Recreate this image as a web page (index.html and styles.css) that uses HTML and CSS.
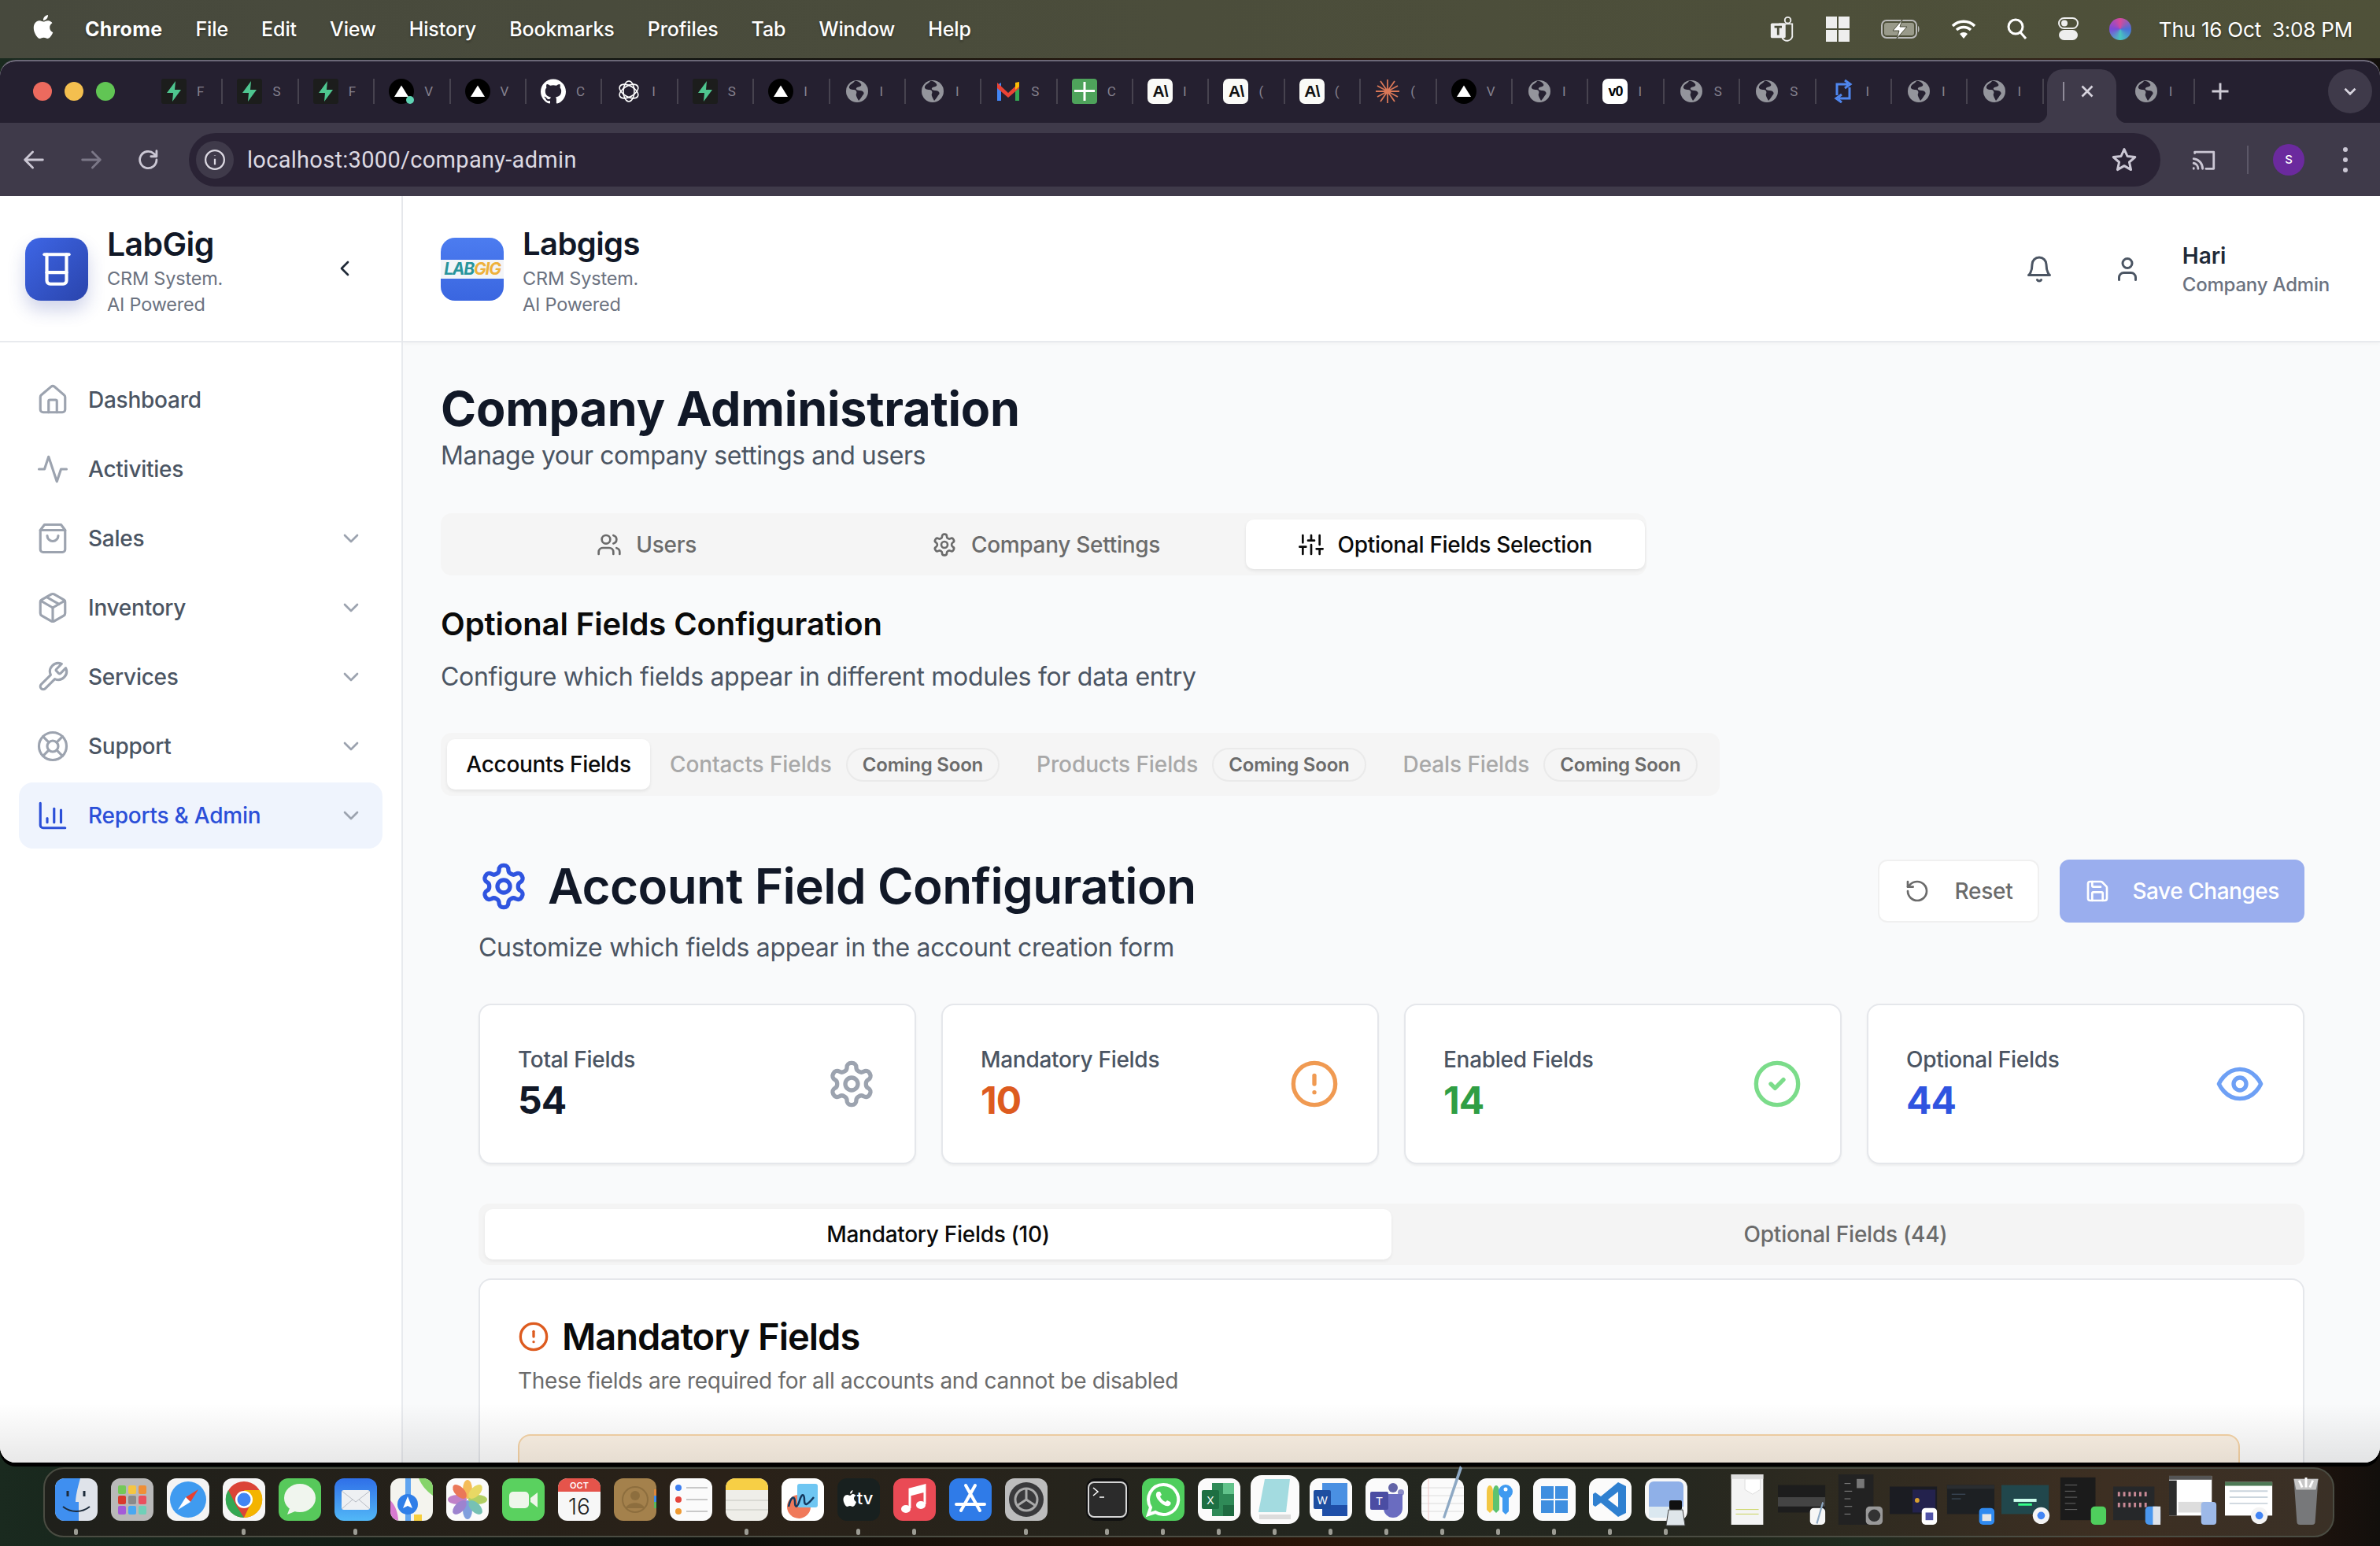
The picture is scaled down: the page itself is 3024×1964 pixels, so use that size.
FILE: index.html
```html
<!DOCTYPE html>
<html lang="en">
<head>
    <meta charset="UTF-8">
    <title>Company Administration</title>
    <link rel="stylesheet" href="styles.css">
</head>
<body>
    <!-- icon sprite -->
    <svg class="sprite" xmlns="http://www.w3.org/2000/svg">
        <symbol id="i-home" viewBox="0 0 24 24"><path d="M15 21v-8a1 1 0 0 0-1-1h-4a1 1 0 0 0-1 1v8"/><path d="M3 10a2 2 0 0 1 .709-1.528l7-5.999a2 2 0 0 1 2.582 0l7 5.999A2 2 0 0 1 21 10v9a2 2 0 0 1-2 2H5a2 2 0 0 1-2-2z"/></symbol>
        <symbol id="i-activity" viewBox="0 0 24 24"><path d="M22 12h-4l-3 9L9 3l-3 9H2"/></symbol>
        <symbol id="i-bag" viewBox="0 0 24 24"><path d="M6 2 3 6v14a2 2 0 0 0 2 2h14a2 2 0 0 0 2-2V6l-3-4Z"/><path d="M3 6h18"/><path d="M16 10a4 4 0 0 1-8 0"/></symbol>
        <symbol id="i-package" viewBox="0 0 24 24"><path d="m7.5 4.27 9 5.15"/><path d="M21 8a2 2 0 0 0-1-1.73l-7-4a2 2 0 0 0-2 0l-7 4A2 2 0 0 0 3 8v8a2 2 0 0 0 1 1.73l7 4a2 2 0 0 0 2 0l7-4A2 2 0 0 0 21 16Z"/><path d="m3.3 7 8.7 5 8.7-5"/><path d="M12 22V12"/></symbol>
        <symbol id="i-wrench" viewBox="0 0 24 24"><path d="M14.7 6.3a1 1 0 0 0 0 1.4l1.6 1.6a1 1 0 0 0 1.4 0l3.77-3.77a6 6 0 0 1-7.94 7.94l-6.91 6.91a2.12 2.12 0 0 1-3-3l6.91-6.91a6 6 0 0 1 7.94-7.94l-3.76 3.76z"/></symbol>
        <symbol id="i-buoy" viewBox="0 0 24 24"><circle cx="12" cy="12" r="10"/><circle cx="12" cy="12" r="4"/><path d="m4.93 4.93 4.24 4.24"/><path d="m14.83 9.17 4.24-4.24"/><path d="m14.83 14.83 4.24 4.24"/><path d="m9.17 14.83-4.24 4.24"/></symbol>
        <symbol id="i-chart" viewBox="0 0 24 24"><path d="M3 3v16a2 2 0 0 0 2 2h16"/><path d="M8 17v-3"/><path d="M13 17V7"/><path d="M18 17v-9"/></symbol>
        <symbol id="i-down" viewBox="0 0 24 24"><path d="m6 9 6 6 6-6"/></symbol>
        <symbol id="i-left" viewBox="0 0 24 24"><path d="m15 18-6-6 6-6"/></symbol>
        <symbol id="i-bell" viewBox="0 0 24 24"><path d="M6 8a6 6 0 0 1 12 0c0 7 3 9 3 9H3s3-2 3-9"/><path d="M10.3 21a1.94 1.94 0 0 0 3.4 0"/></symbol>
        <symbol id="i-user" viewBox="0 0 24 24"><path d="M19 21v-2a4 4 0 0 0-4-4H9a4 4 0 0 0-4 4v2"/><circle cx="12" cy="7" r="4"/></symbol>
        <symbol id="i-users" viewBox="0 0 24 24"><path d="M16 21v-2a4 4 0 0 0-4-4H6a4 4 0 0 0-4 4v2"/><circle cx="9" cy="7" r="4"/><path d="M22 21v-2a4 4 0 0 0-3-3.87"/><path d="M16 3.13a4 4 0 0 1 0 7.75"/></symbol>
        <symbol id="i-settings" viewBox="0 0 24 24"><path d="M12.22 2h-.44a2 2 0 0 0-2 2v.18a2 2 0 0 1-1 1.73l-.43.25a2 2 0 0 1-2 0l-.15-.08a2 2 0 0 0-2.73.73l-.22.38a2 2 0 0 0 .73 2.73l.15.1a2 2 0 0 1 1 1.72v.51a2 2 0 0 1-1 1.74l-.15.09a2 2 0 0 0-.73 2.73l.22.38a2 2 0 0 0 2.73.73l.15-.08a2 2 0 0 1 2 0l.43.25a2 2 0 0 1 1 1.73V20a2 2 0 0 0 2 2h.44a2 2 0 0 0 2-2v-.18a2 2 0 0 1 1-1.73l.43-.25a2 2 0 0 1 2 0l.15.08a2 2 0 0 0 2.73-.73l.22-.39a2 2 0 0 0-.73-2.73l-.15-.08a2 2 0 0 1-1-1.74v-.5a2 2 0 0 1 1-1.74l.15-.09a2 2 0 0 0 .73-2.73l-.22-.38a2 2 0 0 0-2.73-.73l-.15.08a2 2 0 0 1-2 0l-.43-.25a2 2 0 0 1-1-1.73V4a2 2 0 0 0-2-2z"/><circle cx="12" cy="12" r="3"/></symbol>
        <symbol id="i-sliders" viewBox="0 0 24 24"><path d="M4 21v-7M4 10V3M12 21v-9M12 8V3M20 21v-5M20 12V3M1 14h6M9 8h6M17 16h6"/></symbol>
        <symbol id="i-reset" viewBox="0 0 24 24"><path d="M3 12a9 9 0 1 0 9-9 9.75 9.75 0 0 0-6.74 2.74L3 8"/><path d="M3 3v5h5"/></symbol>
        <symbol id="i-save" viewBox="0 0 24 24"><path d="M15.2 3a2 2 0 0 1 1.4.6l3.8 3.8a2 2 0 0 1 .6 1.4V19a2 2 0 0 1-2 2H5a2 2 0 0 1-2-2V5a2 2 0 0 1 2-2z"/><path d="M17 21v-7a1 1 0 0 0-1-1H8a1 1 0 0 0-1 1v7"/><path d="M7 3v4a1 1 0 0 0 1 1h7"/></symbol>
        <symbol id="i-alert" viewBox="0 0 24 24"><circle cx="12" cy="12" r="10"/><path d="M12 8v4"/><path d="M12 16h.01"/></symbol>
        <symbol id="i-check" viewBox="0 0 24 24"><circle cx="12" cy="12" r="10"/><path d="m9 12 2 2 4-4"/></symbol>
        <symbol id="i-eye" viewBox="0 0 24 24"><path d="M2 12s3-7 10-7 10 7 10 7-3 7-10 7-10-7-10-7Z"/><circle cx="12" cy="12" r="3"/></symbol>
        <symbol id="i-beaker" viewBox="0 0 24 24"><path d="M4.5 3h15"/><path d="M6 3v16a2 2 0 0 0 2 2h8a2 2 0 0 0 2-2V3"/><path d="M6 14h12"/></symbol>

        <!-- favicons -->
        <symbol id="f-supa" viewBox="0 0 32 32"><rect width="32" height="32" rx="3" fill="#1c1d1c"/><path d="M18 3 7 18h8l-1 11 11-15h-8z" fill="#4ec68f"/></symbol>
        <symbol id="f-vercel" viewBox="0 0 32 32"><circle cx="16" cy="16" r="16" fill="#000"/><path d="M16 8.5 25 23H7z" fill="#fff"/></symbol>
        <symbol id="f-verceld" viewBox="0 0 32 32"><circle cx="16" cy="16" r="16" fill="#000"/><path d="M16 8.5 25 23H7z" fill="#fff"/><circle cx="27" cy="27" r="5" fill="#5fd4b4"/></symbol>
        <symbol id="f-github" viewBox="0 0 24 24"><path fill="#fff" d="M12 .297c-6.63 0-12 5.373-12 12 0 5.303 3.438 9.8 8.205 11.385.6.113.82-.258.82-.577 0-.285-.01-1.04-.015-2.04-3.338.724-4.042-1.61-4.042-1.61C4.422 18.07 3.633 17.7 3.633 17.7c-1.087-.744.084-.729.084-.729 1.205.084 1.838 1.236 1.838 1.236 1.07 1.835 2.809 1.305 3.495.998.108-.776.417-1.305.76-1.605-2.665-.3-5.466-1.332-5.466-5.93 0-1.31.465-2.38 1.235-3.22-.135-.303-.54-1.523.105-3.176 0 0 1.005-.322 3.3 1.23.96-.267 1.98-.399 3-.405 1.02.006 2.04.138 3 .405 2.28-1.552 3.285-1.23 3.285-1.23.645 1.653.24 2.873.12 3.176.765.84 1.23 1.91 1.23 3.22 0 4.61-2.805 5.625-5.475 5.92.42.36.81 1.096.81 2.22 0 1.606-.015 2.896-.015 3.286 0 .315.21.69.825.57C20.565 22.092 24 17.592 24 12.297c0-6.627-5.373-12-12-12"/></symbol>
        <symbol id="f-openai" viewBox="0 0 32 32"><g fill="none" stroke="#fff" stroke-width="1.600"><ellipse cx="16" cy="16" rx="7" ry="13"/><ellipse cx="16" cy="16" rx="7" ry="13" transform="rotate(60 16 16)"/><ellipse cx="16" cy="16" rx="7" ry="13" transform="rotate(120 16 16)"/></g></symbol>
        <symbol id="f-globe" viewBox="0 0 32 32"><circle cx="16" cy="16" r="14" fill="#94959c"/><path d="M13 3c-2 3-6 4-7 7s3 4 6 4 4 3 3 5 1 5 3 9c3-3 4-6 6-8s-1-5-4-5-6-1-5-3 4-1 6-3-4-7-8-6z" fill="#252030"/></symbol>
        <symbol id="f-gmail" viewBox="0 0 32 32"><path d="M2 28V8l5-3v23z" fill="#4285f4"/><path d="M30 28V8l-5-3v23z" fill="#34a853"/><path d="M2 5l14 13L30 5v7L16 24 2 12z" fill="#ea4335"/><path d="M25 5l5-1v6l-5 4z" fill="#fbbc04"/></symbol>
        <symbol id="f-sheets" viewBox="0 0 32 32"><rect width="32" height="32" rx="4" fill="#4ea35b"/><path d="M14.500 4h3v10H29v3H17.500v11h-3V17H3v-3h11.500z" fill="#fff"/></symbol>
        <symbol id="f-claude" viewBox="0 0 32 32"><path d="M16 1v30M7 3l18 26M25 3 7 29M1 16h30M3 9l26 14M29 9 3 23" stroke="#d97757" stroke-width="1.800"/></symbol>
        <symbol id="f-repeat" viewBox="0 0 32 32"><path d="M8 12V7h14M18 2l7 5-7 5M24 20v5H10M14 20l-7 5 7 5M8 12v9M24 11v9" fill="none" stroke="#4f86ee" stroke-width="3"/></symbol>
    </svg>

    <!-- mac menu bar -->
    <div class="menubar">
        <div class="menu-left">
            <svg class="apple" viewBox="0 0 24 24"><path fill="#fff" d="M12.152 6.896c-.948 0-2.415-1.078-3.96-1.04-2.04.027-3.91 1.183-4.961 3.014-2.117 3.675-.546 9.103 1.519 12.09 1.013 1.454 2.208 3.09 3.792 3.039 1.52-.065 2.09-.987 3.935-.987 1.831 0 2.35.987 3.96.948 1.637-.026 2.676-1.48 3.676-2.948 1.156-1.688 1.636-3.325 1.662-3.415-.039-.013-3.182-1.221-3.22-4.857-.026-3.04 2.48-4.494 2.597-4.559-1.429-2.09-3.623-2.324-4.39-2.376-2-.156-3.675 1.09-4.61 1.09zM15.53 3.83c.843-1.012 1.4-2.427 1.245-3.83-1.207.052-2.662.805-3.532 1.818-.78.896-1.454 2.338-1.273 3.714 1.338.104 2.715-.688 3.559-1.701"/></svg>
            <b>Chrome</b>
            <span>File</span><span>Edit</span><span>View</span><span>History</span><span>Bookmarks</span><span>Profiles</span><span>Tab</span><span>Window</span><span>Help</span>
        </div>
        <div class="menu-right">
            <svg class="st" viewBox="0 0 32 36"><path d="M20 6a4 4 0 1 0 8 0 4 4 0 0 0-8 0z" fill="none" stroke="#eee" stroke-width="2"/><path d="M12 11h18v14a7 7 0 0 1-14 3" fill="none" stroke="#eee" stroke-width="2"/><rect x="1" y="10" width="20" height="20" rx="2" fill="#eee"/><path d="M6 15h10M11 15v11" stroke="#4b4d3b" stroke-width="3"/></svg>
            <svg class="st" viewBox="0 0 32 32"><path d="M1 0h14v15H1zM17 0h14v15H17zM1 17h14v15H1zM17 17h14v15H17z" fill="#eee"/></svg>
            <svg class="st wide" viewBox="0 0 50 26"><rect x="1" y="2" width="44" height="22" rx="6" fill="none" stroke="#bbb" stroke-width="2"/><rect x="4" y="5" width="38" height="16" rx="3" fill="#999a8a"/><path d="M27 1 15 15h8l-3 10 13-15h-9z" fill="#fff" stroke="#4b4d3b"/><path d="M47 9c2 1 2 7 0 8z" fill="#bbb"/></svg>
            <svg class="st" viewBox="0 0 32 26"><g fill="none" stroke="#fff" stroke-width="3.500"><path d="M2 9a20 20 0 0 1 28 0"/><path d="M7 14a13 13 0 0 1 18 0"/></g><path d="M11 19a7 7 0 0 1 10 0l-5 6z" fill="#fff"/></svg>
            <svg class="st small" viewBox="0 0 26 28"><circle cx="11" cy="11" r="9" fill="none" stroke="#fff" stroke-width="3"/><path d="m17 18 7 8" stroke="#fff" stroke-width="3"/></svg>
            <svg class="st small" viewBox="0 0 26 30"><rect x="1" y="1" width="24" height="13" rx="6.500" fill="none" stroke="#eee" stroke-width="2"/><circle cx="8" cy="7.500" r="4" fill="#eee"/><rect x="1" y="16" width="24" height="13" rx="6.500" fill="#eee"/></svg>
            <span class="siri"></span>
            <span class="clock">Thu 16 Oct</span>
            <span class="clock">3:08 PM</span>
        </div>
    </div>

    <div class="window">
        <!-- tab strip -->
        <div class="tabstrip">
            <div class="lights"><i class="red"></i><i class="yellow"></i><i class="green"></i></div>
            <div class="tab"><svg class="fav"><use href="#f-supa"/></svg><span>F</span></div>
            <div class="tab"><svg class="fav"><use href="#f-supa"/></svg><span>S</span></div>
            <div class="tab"><svg class="fav"><use href="#f-supa"/></svg><span>F</span></div>
            <div class="tab"><svg class="fav"><use href="#f-verceld"/></svg><span>V</span></div>
            <div class="tab"><svg class="fav"><use href="#f-vercel"/></svg><span>V</span></div>
            <div class="tab"><svg class="fav"><use href="#f-github"/></svg><span>C</span></div>
            <div class="tab"><svg class="fav"><use href="#f-openai"/></svg><span>I</span></div>
            <div class="tab"><svg class="fav"><use href="#f-supa"/></svg><span>S</span></div>
            <div class="tab"><svg class="fav"><use href="#f-vercel"/></svg><span>I</span></div>
            <div class="tab"><svg class="fav"><use href="#f-globe"/></svg><span>I</span></div>
            <div class="tab"><svg class="fav"><use href="#f-globe"/></svg><span>I</span></div>
            <div class="tab"><svg class="fav"><use href="#f-gmail"/></svg><span>S</span></div>
            <div class="tab"><svg class="fav"><use href="#f-sheets"/></svg><span>C</span></div>
            <div class="tab"><b class="fav-a">A\</b><span>I</span></div>
            <div class="tab"><b class="fav-a">A\</b><span>(</span></div>
            <div class="tab"><b class="fav-a">A\</b><span>(</span></div>
            <div class="tab"><svg class="fav"><use href="#f-claude"/></svg><span>(</span></div>
            <div class="tab"><svg class="fav"><use href="#f-vercel"/></svg><span>V</span></div>
            <div class="tab"><svg class="fav"><use href="#f-globe"/></svg><span>I</span></div>
            <div class="tab"><b class="fav-a fav-v0">v0</b><span>I</span></div>
            <div class="tab"><svg class="fav"><use href="#f-globe"/></svg><span>S</span></div>
            <div class="tab"><svg class="fav"><use href="#f-globe"/></svg><span>S</span></div>
            <div class="tab"><svg class="fav"><use href="#f-repeat"/></svg><span>I</span></div>
            <div class="tab"><svg class="fav"><use href="#f-globe"/></svg><span>I</span></div>
            <div class="tab"><svg class="fav"><use href="#f-globe"/></svg><span>I</span></div>
            <div class="tab tab-active"><em></em><svg class="tab-x" viewBox="0 0 24 24"><path d="M6 6l12 12M18 6 6 18"/></svg></div>
            <div class="tab"><svg class="fav"><use href="#f-globe"/></svg><span>I</span></div>
            <svg class="tab-plus" viewBox="0 0 24 24"><path d="M12 3v18M3 12h18"/></svg>
            <div class="tab-menu"><svg class="tab-x" viewBox="0 0 24 24"><path d="m6 9 6 6 6-6"/></svg></div>
        </div>

        <!-- toolbar -->
        <div class="toolbar">
            <svg class="tool" viewBox="0 0 24 24"><path d="M20 12H4M11 5l-7 7 7 7"/></svg>
            <svg class="tool off" viewBox="0 0 24 24"><path d="M4 12h16M13 5l7 7-7 7"/></svg>
            <svg class="tool" viewBox="0 0 24 24"><path d="M19 12a7.500 7.500 0 1 1-2.400-5.500L19 9M19 4v5h-5"/></svg>
            <div class="omnibox">
                <span class="site-info"><svg class="tool-s" viewBox="0 0 24 24"><circle cx="12" cy="12" r="9.500"/><path d="M12 11v6M12 7.500v.5"/></svg></span>
                <span class="url">localhost:3000/company-admin</span>
                <svg class="tool star" viewBox="0 0 24 24"><path d="m12 3 2.700 6 6.500.7-4.900 4.300 1.400 6.400-5.700-3.300-5.700 3.300 1.400-6.400-4.900-4.300 6.500-.7z"/></svg>
            </div>
            <svg class="tool cast" viewBox="0 0 24 24"><path d="M4 6V5h17v15h-7M3 11a9 9 0 0 1 8 9M3 15a5 5 0 0 1 4 5M3 19.500v.5"/></svg>
            <i class="tool-div"></i>
            <span class="avatar">S</span>
            <span class="kebab"><i></i><i></i><i></i></span>
        </div>

        <!-- the app -->
        <div class="app-page">
            <aside class="sidebar">
                <div class="side-head">
                    <div class="brand-icon"><svg class="ic"><use href="#i-beaker"/></svg></div>
                    <div class="brand-text">
                        <h2>LabGig</h2>
                        <p>CRM System.</p>
                        <p>AI Powered</p>
                    </div>
                    <svg class="ic collapse"><use href="#i-left"/></svg>
                </div>
                <nav class="nav">
                    <a class="nav-item"><svg class="ic"><use href="#i-home"/></svg><span>Dashboard</span></a>
                    <a class="nav-item"><svg class="ic"><use href="#i-activity"/></svg><span>Activities</span></a>
                    <a class="nav-item"><svg class="ic"><use href="#i-bag"/></svg><span>Sales</span><svg class="ic chev"><use href="#i-down"/></svg></a>
                    <a class="nav-item"><svg class="ic"><use href="#i-package"/></svg><span>Inventory</span><svg class="ic chev"><use href="#i-down"/></svg></a>
                    <a class="nav-item"><svg class="ic"><use href="#i-wrench"/></svg><span>Services</span><svg class="ic chev"><use href="#i-down"/></svg></a>
                    <a class="nav-item"><svg class="ic"><use href="#i-buoy"/></svg><span>Support</span><svg class="ic chev"><use href="#i-down"/></svg></a>
                    <a class="nav-item active"><svg class="ic"><use href="#i-chart"/></svg><span>Reports &amp; Admin</span><svg class="ic chev"><use href="#i-down"/></svg></a>
                </nav>
            </aside>

            <div class="main-col">
                <header class="top-head">
                    <div class="co-logo"><span><b>LAB</b><b class="yel">GIG</b></span></div>
                    <div class="brand-text">
                        <h2>Labgigs</h2>
                        <p>CRM System.</p>
                        <p>AI Powered</p>
                    </div>
                    <svg class="ic bell"><use href="#i-bell"/></svg>
                    <svg class="ic head-user"><use href="#i-user"/></svg>
                    <div class="who">
                        <strong>Hari</strong>
                        <small>Company Admin</small>
                    </div>
                </header>

                <main class="content">
                    <h1>Company Administration</h1>
                    <p class="lead page-sub">Manage your company settings and users</p>

                    <div class="tabs-main">
                        <div class="tm"><svg class="ic"><use href="#i-users"/></svg>Users</div>
                        <div class="tm"><svg class="ic"><use href="#i-settings"/></svg>Company Settings</div>
                        <div class="tm on"><svg class="ic"><use href="#i-sliders"/></svg>Optional Fields Selection</div>
                    </div>

                    <h3 class="sec-title">Optional Fields Configuration</h3>
                    <p class="lead sec-sub">Configure which fields appear in different modules for data entry</p>

                    <div class="tabs-sub">
                        <div class="ts on">Accounts Fields</div>
                        <div class="ts">Contacts Fields<em>Coming Soon</em></div>
                        <div class="ts">Products Fields<em>Coming Soon</em></div>
                        <div class="ts">Deals Fields<em>Coming Soon</em></div>
                    </div>

                    <section class="config">
                        <div class="config-head">
                            <div>
                                <h2 class="config-title"><svg class="ic"><use href="#i-settings"/></svg>Account Field Configuration</h2>
                                <p class="lead config-sub">Customize which fields appear in the account creation form</p>
                            </div>
                            <div class="btns">
                                <button class="btn"><svg class="ic"><use href="#i-reset"/></svg>Reset</button>
                                <button class="btn btn-save"><svg class="ic"><use href="#i-save"/></svg>Save Changes</button>
                            </div>
                        </div>

                        <div class="stats">
                            <div class="stat">
                                <div><label>Total Fields</label><b>54</b></div>
                                <svg class="ic c-grey"><use href="#i-settings"/></svg>
                            </div>
                            <div class="stat">
                                <div><label>Mandatory Fields</label><b class="n-orange">10</b></div>
                                <svg class="ic c-orange"><use href="#i-alert"/></svg>
                            </div>
                            <div class="stat">
                                <div><label>Enabled Fields</label><b class="n-green">14</b></div>
                                <svg class="ic c-green"><use href="#i-check"/></svg>
                            </div>
                            <div class="stat">
                                <div><label>Optional Fields</label><b class="n-blue">44</b></div>
                                <svg class="ic c-blue"><use href="#i-eye"/></svg>
                            </div>
                        </div>

                        <div class="tabs-fields">
                            <div class="tf on">Mandatory Fields (10)</div>
                            <div class="tf">Optional Fields (44)</div>
                        </div>

                        <div class="mand-card">
                            <h3><svg class="ic"><use href="#i-alert"/></svg>Mandatory Fields</h3>
                            <p>These fields are required for all accounts and cannot be disabled</p>
                            <div class="mand-box"></div>
                        </div>
                    </section>
                </main>
            </div>
            <div class="dock-shade"></div>
        </div>
    </div>

    <!-- dock -->
    <div class="dock">
        <div class="di run"><svg class="app" viewBox="0 0 54 54"><rect width="54" height="54" rx="12" fill="#dfe3ea"/><path d="M12 0h20c-4 14-6 24-6 30h4v24H12A12 12 0 0 1 0 42V12A12 12 0 0 1 12 0z" fill="#3f8ff0"/><path d="M16 16v7M37 16v7" stroke="#1d2b3a" stroke-width="3"/><path d="M10 36c10 8 24 8 34 0" stroke="#1d2b3a" stroke-width="2" fill="none"/></svg></div>
        <div class="di"><svg class="app" viewBox="0 0 54 54"><rect width="54" height="54" rx="12" fill="#b9b9b9"/><rect x="9" y="9" width="10" height="11" rx="2" fill="#74c958"/><rect x="22" y="9" width="10" height="11" rx="2" fill="#f5c542"/><rect x="35" y="9" width="10" height="11" rx="2" fill="#ef8f37"/><rect x="9" y="22" width="10" height="11" rx="2" fill="#d93a2d"/><rect x="22" y="22" width="10" height="11" rx="2" fill="#8a8a8a"/><rect x="35" y="22" width="10" height="11" rx="2" fill="#e9505f"/><rect x="9" y="35" width="10" height="11" rx="2" fill="#a45bd8"/><rect x="22" y="35" width="10" height="11" rx="2" fill="#4aa8f0"/><rect x="35" y="35" width="10" height="11" rx="2" fill="#6fd0b8"/></svg></div>
        <div class="di"><svg class="app" viewBox="0 0 54 54"><rect width="54" height="54" rx="12" fill="#f4f4f4"/><circle cx="27" cy="27" r="23" fill="#3f9bf0"/><path d="M40 14 24 24l6 6z" fill="#e8402f"/><path d="M14 40 30 30l-6-6z" fill="#fff"/></svg></div>
        <div class="di run"><svg class="app" viewBox="0 0 54 54"><rect width="54" height="54" rx="12" fill="#f6f6f6"/><circle cx="27" cy="27" r="23" fill="#db4437"/><path d="M27 50a23 23 0 0 1-20-35l11 21z" fill="#34a853"/><path d="M27 50a23 23 0 0 0 20-35l-20 0 10 14z" fill="#f4b400"/><circle cx="27" cy="27" r="11" fill="#fff"/><circle cx="27" cy="27" r="8.500" fill="#4285f4"/></svg></div>
        <div class="di"><svg class="app" viewBox="0 0 54 54"><rect width="54" height="54" rx="12" fill="#57c95b"/><ellipse cx="27" cy="25" rx="20" ry="18" fill="#f0f5ee"/><path d="M14 38l-3 8 10-4z" fill="#f0f5ee"/></svg></div>
        <div class="di run"><svg class="app" viewBox="0 0 54 54"><defs><linearGradient id="g-mail" x1="0" y1="0" x2="0" y2="1"><stop offset="0" stop-color="#2f6fe8"/><stop offset="1" stop-color="#52b8f7"/></linearGradient></defs><rect width="54" height="54" rx="12" fill="url(#g-mail)"/><rect x="9" y="15" width="36" height="25" rx="3" fill="#eef0f3"/><path d="M9 16l18 14 18-14M9 39l14-12M45 39 31 27" fill="none" stroke="#b8bcc4"/></svg></div>
        <div class="di"><svg class="app" viewBox="0 0 54 54"><rect width="54" height="54" rx="12" fill="#f4f4ee"/><path d="M36 0h6a12 12 0 0 1 12 12v10c-8-6-14-12-18-22z" fill="#86d46b"/><path d="M0 28c6 6 10 16 10 26h-0A12 12 0 0 1 0 42z" fill="#d77ad0"/><path d="M19 0h7v54h-7z" fill="#60a5f0"/><circle cx="22" cy="33" r="13" fill="#2f7ee8"/><path d="M22 23l6 15-6-3-6 3z" fill="#fff"/><path d="M30 46h10v8H30z" fill="#f6cf3f"/></svg></div>
        <div class="di"><svg class="app" viewBox="0 0 54 54"><rect width="54" height="54" rx="12" fill="#fbfbfb"/><g opacity=".85"><ellipse cx="27" cy="14" rx="6" ry="12" fill="#f3b23c"/><ellipse cx="27" cy="40" rx="6" ry="12" fill="#6b8fd8"/><ellipse cx="14" cy="27" rx="12" ry="6" fill="#b66cc0"/><ellipse cx="40" cy="27" rx="12" ry="6" fill="#a5c84a"/><ellipse cx="17" cy="17" rx="6" ry="11" fill="#e8603c" transform="rotate(-45 17 17)"/><ellipse cx="37" cy="17" rx="6" ry="11" fill="#e5d24a" transform="rotate(45 37 17)"/><ellipse cx="17" cy="37" rx="6" ry="11" fill="#8d6fc8" transform="rotate(45 17 37)"/><ellipse cx="37" cy="37" rx="6" ry="11" fill="#5fb8a8" transform="rotate(-45 37 37)"/></g></svg></div>
        <div class="di"><svg class="app" viewBox="0 0 54 54"><rect width="54" height="54" rx="12" fill="#5ad15f"/><rect x="9" y="17" width="25" height="21" rx="5" fill="#eef6ea"/><path d="M36 25l9-7v19l-9-7z" fill="#eef6ea"/></svg></div>
        <div class="di"><svg class="app" viewBox="0 0 54 54"><rect width="54" height="54" rx="12" fill="#f7f7f7"/><path d="M0 17V12A12 12 0 0 1 12 0h30a12 12 0 0 1 12 12v5z" fill="#e5544b"/><text x="27" y="13" class="cal-m">OCT</text><text x="27" y="46" class="cal-d">16</text></svg></div>
        <div class="di"><svg class="app" viewBox="0 0 54 54"><rect width="54" height="54" rx="12" fill="#a4814c"/><circle cx="27" cy="27" r="16" fill="none" stroke="#8d6e3e" stroke-width="2"/><circle cx="27" cy="22" r="6" fill="#8d6e3e"/><path d="M15 38c3-9 21-9 24 0z" fill="#8d6e3e"/><path d="M51 14h3v8h-3z" fill="#e0883a"/><path d="M51 22h3v8h-3z" fill="#3f8ff0"/><path d="M51 30h3v8h-3z" fill="#58b85c"/></svg></div>
        <div class="di"><svg class="app" viewBox="0 0 54 54"><rect width="54" height="54" rx="12" fill="#fbfbfb"/><circle cx="11" cy="12" r="4" fill="#3d7ff0"/><circle cx="11" cy="27" r="4" fill="#e5453c"/><circle cx="11" cy="42" r="4" fill="#ef9a32"/><path d="M21 12h27M21 27h27M21 42h27" stroke="#c9c9c9" stroke-width="2"/></svg></div>
        <div class="di run"><svg class="app" viewBox="0 0 54 54"><rect width="54" height="54" rx="12" fill="#efeee9"/><path d="M0 15V12A12 12 0 0 1 12 0h30a12 12 0 0 1 12 12v3z" fill="#f7cf45"/><path d="M0 28h54M0 40h54" stroke="#dadad4" stroke-width="2"/></svg></div>
        <div class="di"><svg class="app" viewBox="0 0 54 54"><rect width="54" height="54" rx="12" fill="#fff"/><circle cx="22" cy="36" r="15" fill="#f0795a"/><rect x="20" y="7" width="26" height="30" rx="3" fill="#6fc6f2"/><path d="M9 36c3-14 8-14 8-6s3 8 6-2 6-8 6 0 4 6 12-4" fill="none" stroke="#15385e" stroke-width="2.500"/></svg></div>
        <div class="di run"><svg class="app" viewBox="0 0 54 54"><rect width="54" height="54" rx="12" fill="#18201f"/><text x="35" y="33" class="tv-txt">tv</text><path d="M16 22c-1 0-2-1-3.500-1-3 0-5 3-5 6 0 4 3 9 5 9 1 0 2-1 3.500-1s2 1 3.500 1c2 0 4-4 4.500-6-2-1-3-3-3-4.500s1-3 2.500-3.500c-1-1.500-3-2-4-2-1.500 0-2.500 2-3.500 2zM18 19c1-1 1.500-2.500 1.500-4-1.500.2-3.500 2-3.500 4.500 1 0 1.500 0 2-.5z" fill="#fff"/></svg></div>
        <div class="di run"><svg class="app" viewBox="0 0 54 54"><rect width="54" height="54" rx="12" fill="#ea4a55"/><path d="M21 14v24M40 9v24M21 14l19-5v7l-19 5z" stroke="#fff" stroke-width="3" fill="#fff"/><ellipse cx="16" cy="39" rx="6" ry="5" fill="#fff"/><ellipse cx="35" cy="34" rx="6" ry="5" fill="#fff"/></svg></div>
        <div class="di"><svg class="app" viewBox="0 0 54 54"><rect width="54" height="54" rx="12" fill="#2f7be8"/><path d="M21 9l18 32M33 9 15 41M9 33h36" stroke="#fff" stroke-width="4" stroke-linecap="round"/></svg></div>
        <div class="di run"><svg class="app" viewBox="0 0 54 54"><rect width="54" height="54" rx="12" fill="#bdbdbd"/><circle cx="27" cy="27" r="22" fill="#3a3a3c"/><circle cx="27" cy="27" r="14" fill="none" stroke="#aaa" stroke-width="3"/><path d="M27 27V13M27 27l12 8M27 27l-12 8" stroke="#aaa" stroke-width="3"/></svg></div>
        <i class="dock-sep"></i>
        <div class="di run"><svg class="app" viewBox="0 0 54 54"><rect width="54" height="54" rx="12" fill="#111"/><rect x="3" y="5" width="48" height="44" rx="7" fill="#2b2b2b" stroke="#d6d6d6" stroke-width="2"/><path d="M9 12l6 5-6 5M17 24h6" fill="none" stroke="#fff" stroke-width="1.500"/></svg></div>
        <div class="di run"><svg class="app" viewBox="0 0 54 54"><rect width="54" height="54" rx="12" fill="#4fce5d"/><path d="M27 8a19 19 0 0 0-16 29l-3 9 9-3A19 19 0 1 0 27 8z" fill="none" stroke="#fff" stroke-width="4"/><path d="M20 17c-3 2-3 6 1 11s9 8 13 7c3-1 3-4 2-5l-4-2-2 2c-3-1-6-4-7-7l2-2-2-4z" fill="#fff"/></svg></div>
        <div class="di run"><svg class="app" viewBox="0 0 54 54"><rect width="54" height="54" rx="12" fill="#fbfbfb"/><path d="M18 6h28v42H18z" fill="#2f8a57"/><path d="M32 6h14v14H32z" fill="#62c38b"/><path d="M32 34h14v14H32z" fill="#1f6b41"/><rect x="5" y="15" width="22" height="24" rx="2" fill="#1d6f42"/><text x="16" y="33" class="mso">X</text></svg></div>
        <div class="di run"><svg class="app" viewBox="0 0 54 54"><rect x="-4" y="-4" width="62" height="62" rx="14" fill="#fbfbfb"/><rect x="7" y="46" width="40" height="6" fill="#dcdcdc"/><path d="M14 1h32l-5 42H6z" fill="#a3dbe0"/></svg></div>
        <div class="di run"><svg class="app" viewBox="0 0 54 54"><rect width="54" height="54" rx="12" fill="#fbfbfb"/><path d="M16 6h32v42H16z" fill="#4a90e2"/><path d="M16 34h32v14H16z" fill="#1f4fa8"/><rect x="5" y="15" width="22" height="24" rx="2" fill="#1e4ea0"/><text x="16" y="33" class="mso">W</text></svg></div>
        <div class="di run"><svg class="app" viewBox="0 0 54 54"><rect width="54" height="54" rx="12" fill="#fbfbfb"/><circle cx="35" cy="12" r="6" fill="#6264a7"/><circle cx="45" cy="18" r="4" fill="#8b8cc7"/><path d="M23 20h24v18a12 12 0 0 1-24 0z" fill="#6a6cc0"/><rect x="6" y="17" width="23" height="23" rx="2" fill="#4b4da3"/><text x="17.500" y="34" class="mso">T</text></svg></div>
        <div class="di run"><svg class="app" viewBox="0 0 54 54"><rect width="54" height="54" rx="12" fill="#fbfbfb"/><path d="M0 12h54M0 22h54M0 32h54M0 42h54" stroke="#dcdcdc"/><path d="M9 0v54" stroke="#f2c6c6"/><path d="M49 -16l3 3-22 64-3-1z" fill="#8ea9c4"/></svg></div>
        <div class="di run"><svg class="app" viewBox="0 0 54 54"><rect width="54" height="54" rx="12" fill="#fbfbfb"/><path d="M12 18c0-12 8-12 8 0v22l-4 4-4-4z" fill="#f2c744"/><path d="M20 18c0-12 8-12 8 0v22l-4 4-4-4z" fill="#5dc36f"/><circle cx="36" cy="17" r="9" fill="#3f9af0"/><path d="M32 22h8v20l-4 4-4-4z" fill="#3f9af0"/><circle cx="36" cy="14" r="2.500" fill="#fff"/></svg></div>
        <div class="di run"><svg class="app" viewBox="0 0 54 54"><rect width="54" height="54" rx="12" fill="#fbfbfb"/><path d="M10 10h16v16H10zM28 10h16v16H28zM10 28h16v16H10zM28 28h16v16H28z" fill="#3f8fe0"/></svg></div>
        <div class="di run"><svg class="app" viewBox="0 0 54 54"><rect width="54" height="54" rx="12" fill="#fbfbfb"/><path d="M37 5l10 5v34l-10 5-22-18-7 5-3-2V20l3-2 7 5zM37 17 24 27l13 10z" fill="#2f80d0"/></svg></div>
        <div class="di run"><svg class="app" viewBox="0 0 54 54"><rect width="54" height="54" rx="12" fill="#f7f7f7"/><rect x="5" y="4" width="44" height="46" rx="6" fill="#8fb0e8"/><rect x="5" y="36" width="44" height="14" fill="#dbe8f0"/><rect x="31" y="28" width="16" height="12" rx="2" fill="#111"/><path d="M30 40h18l3 20H27z" fill="#dfe6ea" stroke="#444"/></svg></div>
        <i class="dock-sep"></i>
        <div class="di thumb"><svg viewBox="0 0 66 66"><rect x="12" y="0" width="42" height="66" fill="#f4f4f4"/><rect x="12" y="0" width="42" height="6" fill="#ddd"/><path d="M18 46h30M18 52h30" stroke="#c9d45a"/><path d="M30 6h20v14l-10 6-10-6z" fill="#fff" stroke="#ddd"/></svg></div>
        <div class="di thumb"><svg viewBox="0 0 66 66"><rect x="0" y="14" width="62" height="36" fill="#1d1d1d"/><path d="M0 30h62v12H0z" fill="#444"/><rect x="42" y="44" width="20" height="22" rx="5" fill="#f6f6f6"/><path d="M58 36l2 1-8 28-2-1z" fill="#8ea9c4"/></svg></div>
        <div class="di thumb"><svg viewBox="0 0 66 66"><rect x="6" y="0" width="46" height="66" fill="#222"/><path d="M14 12h8M14 22h10M14 32h8M14 42h10M14 52h8" stroke="#888"/><rect x="30" y="6" width="10" height="12" fill="#777"/><rect x="42" y="42" width="22" height="24" rx="5" fill="#999"/><circle cx="53" cy="54" r="8" fill="#333"/></svg></div>
        <div class="di thumb"><svg viewBox="0 0 66 66"><rect x="0" y="16" width="62" height="36" fill="#1b1c22"/><rect x="30" y="20" width="30" height="30" fill="#23224d"/><circle cx="36" cy="34" r="3" fill="#d8a030"/><rect x="42" y="44" width="20" height="22" rx="5" fill="#fff"/><rect x="47" y="50" width="10" height="10" fill="#5053a8"/></svg></div>
        <div class="di thumb"><svg viewBox="0 0 66 66"><rect x="2" y="14" width="62" height="38" fill="#1d2023"/><rect x="2" y="14" width="62" height="5" fill="#2a2d30"/><path d="M8 26h18M8 32h12" stroke="#456"/><rect x="44" y="44" width="20" height="22" rx="5" fill="#2f8af0"/><rect x="48" y="52" width="12" height="9" fill="#e6e6e6"/></svg></div>
        <div class="di thumb"><svg viewBox="0 0 66 66"><rect x="0" y="14" width="62" height="38" fill="#21474c"/><rect x="16" y="32" width="30" height="4" fill="#cfe"/><rect x="22" y="38" width="18" height="3" fill="#3f8"/><circle cx="52" cy="54" r="11" fill="#f4f4f4"/><circle cx="52" cy="54" r="5" fill="#4285f4"/></svg></div>
        <div class="di thumb"><svg viewBox="0 0 66 66"><rect x="4" y="4" width="46" height="56" fill="#1b1b1b"/><path d="M10 14h16M10 22h14M10 30h16M10 38h14M10 46h16" stroke="#6a6a6a"/><rect x="44" y="42" width="20" height="24" rx="5" fill="#4fce5d"/></svg></div>
        <div class="di thumb"><svg viewBox="0 0 66 66"><rect x="0" y="16" width="54" height="44" fill="#26282a"/><path d="M6 26h42M6 40h42" stroke="#c98a96" stroke-width="6" stroke-dasharray="3 4"/><rect x="42" y="42" width="20" height="24" rx="5" fill="#4a97ee"/><path d="M52 42h10v24H52z" fill="#dfe3ea"/></svg></div>
        <div class="di thumb"><svg viewBox="0 0 66 66"><rect x="0" y="2" width="56" height="52" fill="#fff"/><rect x="0" y="2" width="56" height="5" fill="#555"/><rect x="0" y="8" width="10" height="46" fill="#2c2c2c"/><rect x="12" y="36" width="40" height="14" fill="#ddd"/><rect x="42" y="36" width="20" height="30" rx="4" fill="#9db9e8"/></svg></div>
        <div class="di thumb"><svg viewBox="0 0 66 66"><rect x="0" y="10" width="62" height="44" fill="#fff"/><rect x="0" y="10" width="62" height="5" fill="#4f7a56"/><path d="M6 22h50M6 30h50M6 38h50" stroke="#cbd5dd" stroke-width="2"/><circle cx="45" cy="54" r="11" fill="#f4f4f4"/><circle cx="45" cy="54" r="5" fill="#4285f4"/></svg></div>
        <div class="di thumb"><svg viewBox="0 0 66 66"><path d="M17 6h32l-4 56a4 4 0 0 1-4 4H25a4 4 0 0 1-4-4z" fill="#77787a"/><path d="M17 6h32l-3 14H20z" fill="#c6c6c6"/><path d="M24 8l4 9M33 4v13M42 8l-4 9" stroke="#fff" stroke-width="3"/></svg></div>
    </div>
</body>
</html>
```

FILE: styles.css
```css
* {
    box-sizing: border-box;
}

html, body {
    margin: 0;
    padding: 0;
}

body {
    width: 3024px;
    height: 1964px;
    overflow: hidden;
    font-family: Inter, "Liberation Sans", sans-serif;
    background: linear-gradient(90deg, #1a2a1f 0%, #0d0f0b 30%, #2a1408 55%, #1f2b1f 78%, #3a1c10 90%, #120f0c 100%);
}

h1, h2, h3, p {
    margin: 0;
}

.sprite {
    display: block;
    width: 0;
    height: 0;
}

.ic {
    width: 40px;
    height: 40px;
    flex: none;
    fill: none;
    stroke: currentColor;
    stroke-width: 2;
    stroke-linecap: round;
    stroke-linejoin: round;
}

/* menu bar */
.menubar {
    height: 74px;
    display: flex;
    justify-content: space-between;
    align-items: center;
    padding: 0 35px 0 40px;
    background: linear-gradient(90deg, #47493d, #4f5139);
    color: #fff;
    font-size: 25px;
    font-weight: 500;
    letter-spacing: -.1px;
    text-shadow: 0 2px 3px rgba(0, 0, 0, .35);
}

.menu-left {
    display: flex;
    align-items: center;
    gap: 42px;
}

.menu-left b {
    font-weight: 700;
    margin-left: -4px;
    letter-spacing: .3px;
}

.apple {
    width: 30px;
    height: 34px;
    margin-top: -6px;
}

.menu-right {
    display: flex;
    align-items: center;
    gap: 39px;
}

.st {
    width: 32px;
    height: 34px;
}

.st.wide {
    width: 50px;
    height: 28px;
}

.st.small {
    width: 26px;
    height: 32px;
}

.siri {
    width: 28px;
    height: 28px;
    border-radius: 50%;
    background: conic-gradient(#d84a9a, #4a6fd8, #49c6c0, #7a4ad8, #d84a9a);
    margin-right: -4px;
}

.clock {
    font-size: 26px;
    font-weight: 400;
    margin-right: -25px;
    letter-spacing: -.2px;
}

.clock + .clock {
    margin-right: 0;
}

/* browser window */
.window {
    margin-top: 2px;
    height: 1782px;
    border-radius: 20px;
    border-top: 2px solid #6c6878;
    overflow: hidden;
    display: flex;
    flex-direction: column;
    background: #fff;
    box-shadow: 0 5px 0 #000;
}

.tabstrip {
    height: 78px;
    flex: none;
    padding-top: 10px;
    display: flex;
    background: #252030;
    color: #85828f;
    font-family: Roboto, sans-serif;
    font-size: 17px;
}

.lights {
    width: 187px;
    height: 56px;
    padding-left: 42px;
    display: flex;
    align-items: center;
    gap: 16px;
}

.lights i {
    width: 24px;
    height: 24px;
    border-radius: 50%;
}

.red { background: #ec6a5e; }
.yellow { background: #f4bf4f; }
.green { background: #61c554; }

.tab {
    width: 96.400px;
    height: 56px;
    flex: none;
    padding-left: 18px;
    display: flex;
    align-items: center;
    gap: 13px;
    position: relative;
}

.tab::after {
    content: "";
    position: absolute;
    right: 0;
    top: 12px;
    height: 32px;
    width: 2px;
    background: #47434f;
}

.fav {
    width: 32px;
    height: 32px;
    flex: none;
}

.fav-a {
    width: 32px;
    height: 32px;
    flex: none;
    border-radius: 7px;
    background: #fafaf7;
    color: #111;
    font-family: "Liberation Sans", sans-serif;
    font-size: 21px;
    line-height: 32px;
    text-align: center;
    letter-spacing: -1px;
}

.fav-v0 {
    font-size: 18px;
    background: #fff;
    color: #000;
}

.tab-active {
    height: 68px;
    background: #3f3a4a;
    border-radius: 20px 20px 0 0;
    padding-left: 20px;
    width: 88px;
    margin: 0 4px;
    gap: 16px;
}

.tab-active::after {
    display: none;
}

.tab-active::before {
    content: "";
    position: absolute;
    left: -14px;
    right: -14px;
    bottom: 0;
    height: 14px;
    z-index: 0;
    background:
        radial-gradient(circle at 0 0, #252030 14px, #3f3a4a 15px) left / 14px 14px no-repeat,
        radial-gradient(circle at 100% 0, #252030 14px, #3f3a4a 15px) right / 14px 14px no-repeat;
}

.tab-active em {
    width: 2px;
    height: 24px;
    margin-top: -12px;
    background: #8f8b99;
}

.tab-x {
    width: 26px;
    height: 26px;
    flex: none;
    fill: none;
    stroke: #d6d3dd;
    stroke-width: 2.500;
    margin-top: -12px;
}

.tab-plus {
    width: 28px;
    height: 28px;
    margin: 14px 0 0 18px;
    fill: none;
    stroke: #cfccd6;
    stroke-width: 2.500;
}

.tab-menu {
    width: 56px;
    height: 56px;
    margin-left: auto;
    margin-right: 10px;
    border-radius: 50%;
    background: #3f3a4a;
    display: flex;
    justify-content: center;
    align-items: center;
}

.tab-menu .tab-x {
    margin: 0;
}

.toolbar {
    height: 93px;
    flex: none;
    display: flex;
    align-items: center;
    padding: 0 30px 0 26px;
    background: #3f3a4a;
}

.tool {
    width: 34px;
    height: 34px;
    flex: none;
    margin-right: 39px;
    fill: none;
    stroke: #cbc7d4;
    stroke-width: 2;
    stroke-linecap: round;
    stroke-linejoin: round;
}

.tool.off {
    stroke: #7b7787;
}

.omnibox {
    width: 2505px;
    height: 68px;
    margin-left: -5px;
    padding: 0 28px 0 9px;
    border-radius: 34px;
    background: #2a2335;
    display: flex;
    align-items: center;
    color: #dcd9e2;
    font-family: Roboto, sans-serif;
    font-size: 29px;
    letter-spacing: .3px;
}

.site-info {
    width: 48px;
    height: 48px;
    border-radius: 50%;
    background: #3f3a4a;
    display: flex;
    justify-content: center;
    align-items: center;
    margin-right: 17px;
}

.tool-s {
    width: 30px;
    height: 30px;
    fill: none;
    stroke: #dcd9e2;
    stroke-width: 1.800;
}

.star {
    margin: 0 0 0 auto;
    width: 36px;
    height: 36px;
}

.cast {
    margin: 0 0 0 38px;
}

.tool-div {
    width: 2px;
    height: 36px;
    margin-left: 38px;
    background: #5c5868;
}

.avatar {
    width: 40px;
    height: 40px;
    margin-left: 31px;
    border-radius: 50%;
    background: #6b2a9e;
    color: #fff;
    font-size: 15px;
    font-weight: 500;
    line-height: 40px;
    text-align: center;
}

.kebab {
    margin-left: 49px;
    display: flex;
    flex-direction: column;
    gap: 7px;
}

.kebab i {
    width: 6px;
    height: 6px;
    border-radius: 50%;
    background: #cbc7d4;
}

/* the crm page */
.app-page {
    flex: 1;
    min-height: 0;
    display: flex;
    position: relative;
}

.dock-shade {
    position: absolute;
    left: 0;
    right: 0;
    bottom: 0;
    height: 75px;
    background: linear-gradient(rgba(0, 0, 0, 0), rgba(0, 0, 0, .09));
    pointer-events: none;
}

.sidebar {
    width: 512px;
    flex: none;
    background: #fff;
    border-right: 2px solid #e8eaee;
}

.side-head {
    height: 186px;
    padding: 53px 0 0 32px;
    border-bottom: 2px solid #e8eaee;
    display: flex;
    gap: 24px;
    position: relative;
}

.brand-icon {
    width: 80px;
    height: 80px;
    flex: none;
    border-radius: 20px;
    background: linear-gradient(135deg, #3e66e6, #2a44ac);
    box-shadow: 0 12px 22px rgba(40, 60, 160, .22);
    color: #fff;
    display: flex;
    justify-content: center;
    align-items: center;
}

.brand-icon .ic {
    width: 50px;
    height: 50px;
}

.brand-text {
    margin-top: -18px;
    color: #6b7280;
    font-size: 23.500px;
    line-height: 33px;
    letter-spacing: -.2px;
}

.brand-text h2 {
    color: #111827;
    font-size: 41px;
    font-weight: 600;
    line-height: 52px;
    letter-spacing: -.6px;
    margin-bottom: 1px;
}

.top-head .brand-text h2 {
    font-size: 40px;
}

.collapse {
    position: absolute;
    left: 422px;
    top: 76px;
    width: 32px;
    height: 32px;
    color: #1f2937;
}

.nav {
    padding: 31px 24px 0;
    display: flex;
    flex-direction: column;
    gap: 4px;
}

.nav-item {
    height: 84px;
    padding: 0 22px;
    border-radius: 18px;
    display: flex;
    align-items: center;
    gap: 24px;
    color: #4b5563;
    font-size: 28px;
    font-weight: 500;
    letter-spacing: -.25px;
}

.nav-item .ic {
    width: 42px;
    height: 42px;
    color: #9ca3af;
    stroke-width: 1.800;
}

.nav-item .chev {
    width: 32px;
    height: 32px;
    margin-left: auto;
    margin-right: 2px;
    stroke-width: 2;
}

.nav-item.active {
    background: #eff4fd;
    color: #2b4fd8;
}

.nav-item.active .ic:first-child {
    color: #2b4fd8;
}

.main-col {
    flex: 1;
    min-width: 0;
    background: #f9fafb;
}

.top-head {
    height: 186px;
    padding: 53px 64px 0 48px;
    background: #fff;
    border-bottom: 2px solid #e8eaee;
    box-shadow: 0 2px 4px rgba(0, 0, 0, .03);
    display: flex;
    gap: 24px;
}

.co-logo {
    width: 80px;
    height: 80px;
    flex: none;
    border-radius: 18px;
    overflow: hidden;
    background: linear-gradient(#4c7cf0, #3a66e0);
    display: flex;
    align-items: center;
}

.co-logo span {
    width: 100%;
    height: 24px;
    background: #f3f5f8;
    color: #27949c;
    font-size: 21px;
    font-style: italic;
    line-height: 23px;
    text-align: center;
    letter-spacing: -1.200px;
}

.yel {
    color: #eeb13c;
}

.bell {
    margin: 22px 0 0 auto;
    color: #4b5563;
    width: 36px;
    height: 36px;
}

.head-user {
    margin: 22px 0 0 52px;
    color: #4b5563;
    width: 36px;
    height: 36px;
}

.who {
    margin: -2px 0 0 28px;
    display: flex;
    flex-direction: column;
    color: #6b7280;
}

.who strong {
    color: #1f2937;
    font-size: 28px;
    font-weight: 600;
    line-height: 38px;
    margin-top: 6px;
}

.who small {
    font-size: 24px;
    line-height: 36px;
    letter-spacing: -.2px;
    font-weight: 500;
}

.content {
    padding: 48px 48px 0;
}

h1 {
    color: #111827;
    font-size: 61px;
    font-weight: 700;
    line-height: 72px;
    letter-spacing: -.2px;
}

.lead {
    color: #4b5563;
    font-size: 32px;
    line-height: 48px;
    letter-spacing: -.3px;
}

.page-sub {
    letter-spacing: -.45px;
}

.tabs-main {
    width: 1532px;
    height: 79px;
    margin-top: 49px;
    padding: 8px 2px 8px 8px;
    border-radius: 14px;
    background: #f5f5f5;
    display: grid;
    grid-template-columns: repeat(3, 1fr);
}

.tm {
    border-radius: 10px;
    display: flex;
    justify-content: center;
    align-items: center;
    gap: 18px;
    color: #6b6b6b;
    font-size: 28px;
    font-weight: 500;
    letter-spacing: -.3px;
}

.tm .ic {
    width: 32px;
    height: 32px;
}

.tm.on {
    background: #fff;
    color: #0a0a0a;
    box-shadow: 0 2px 4px rgba(0, 0, 0, .08);
}

.sec-title {
    margin-top: 34px;
    color: #0a0a0a;
    font-size: 40px;
    font-weight: 600;
    line-height: 56px;
    letter-spacing: -.1px;
}

.sec-sub {
    margin-top: 15px;
}

.tabs-sub {
    width: 1625px;
    height: 80px;
    margin-top: 47px;
    padding: 8px;
    border-radius: 14px;
    background: #f5f5f5;
    display: flex;
    gap: 0;
}

.ts {
    padding: 0 22px;
    border-radius: 10px;
    display: flex;
    flex: none;
    align-items: center;
    gap: 18px;
    color: #a8a8a8;
    font-size: 28px;
    font-weight: 500;
    letter-spacing: -.1px;
    white-space: nowrap;
    margin-right: 3px;
}

.ts.on {
    width: 258px;
    background: #fff;
    color: #0a0a0a;
    box-shadow: 0 2px 4px rgba(0, 0, 0, .08);
    justify-content: center;
    letter-spacing: -.3px;
}

.ts em {
    height: 43px;
    padding: 0 19px;
    border: 2px solid #eaeaea;
    border-radius: 22px;
    color: #6b6b6b;
    font-size: 24px;
    font-style: normal;
    font-weight: 600;
    line-height: 39px;
    letter-spacing: -.2px;
}

.config {
    margin-top: 75px;
    padding: 0 48px;
}

.config-head {
    display: flex;
    justify-content: space-between;
}

.config-title {
    display: flex;
    align-items: center;
    gap: 24px;
    color: #111827;
    font-size: 62px;
    font-weight: 600;
    line-height: 80px;
    letter-spacing: -.6px;
}

.config-title .ic {
    width: 64px;
    height: 64px;
    color: #2f54e0;
    margin-left: 0;
}

.config-sub {
    margin-top: 14px;
}

.btns {
    display: flex;
    gap: 26px;
    padding-top: 6px;
}

.btn {
    height: 80px;
    padding: 0 32px;
    border: 2px solid #f0f0f0;
    border-radius: 12px;
    background: #fff;
    color: #6b6b6b;
    font-family: inherit;
    font-size: 28px;
    font-weight: 500;
    letter-spacing: -.3px;
    display: flex;
    align-items: center;
    gap: 32px;
}

.btn .ic {
    width: 32px;
    height: 32px;
}

.btn-save {
    border-color: #9aaeee;
    background: #9aaeee;
    color: #fff;
    gap: 28px;
    padding: 0 30px;
    letter-spacing: -.45px;
}

.stats {
    margin-top: 47px;
    display: grid;
    grid-template-columns: repeat(4, 1fr);
    gap: 32px;
}

.stat {
    height: 204px;
    padding: 0 48px;
    border: 2px solid #e5e7eb;
    border-radius: 16px;
    background: #fff;
    box-shadow: 0 2px 3px rgba(0, 0, 0, .05);
    display: flex;
    justify-content: space-between;
    align-items: center;
}

.stat label {
    display: block;
    color: #4b5563;
    font-size: 28px;
    font-weight: 500;
    line-height: 40px;
    letter-spacing: -.3px;
}

.stat b {
    display: block;
    margin-top: 2px;
    color: #111827;
    font-size: 48px;
    font-weight: 700;
    line-height: 60px;
    letter-spacing: -1px;
}

.stat .ic {
    width: 64px;
    height: 64px;
}

.c-grey { color: #9ca3af; }
.c-orange { color: #f09a52; }
.c-green { color: #7bdc8a; }
.c-blue { color: #6ea0f5; }

.stat .n-orange { color: #dd5b1f; }
.stat .n-green { color: #2f9e44; }
.stat .n-blue { color: #2f54e0; }

.tabs-fields {
    height: 78px;
    margin-top: 50px;
    padding: 7px 0 7px 8px;
    border-radius: 14px;
    background: #f4f4f4;
    display: grid;
    grid-template-columns: 1152px 1fr;
}

.tf {
    display: flex;
    justify-content: center;
    align-items: center;
    border-radius: 10px;
    color: #6b6b6b;
    font-size: 28px;
    font-weight: 500;
    letter-spacing: -.3px;
}

.tf.on {
    background: #fff;
    color: #0a0a0a;
    box-shadow: 0 2px 4px rgba(0, 0, 0, .06);
}

.tf:last-child {
    letter-spacing: -.25px;
    padding-right: 6px;
}

.mand-card {
    margin-top: 17px;
    padding: 44px 48px 0;
    height: 400px;
    border: 2px solid #e5e7eb;
    border-radius: 16px;
    background: #fff;
}

.mand-card h3 {
    display: flex;
    align-items: center;
    gap: 16px;
    color: #0a0a0a;
    font-size: 47px;
    font-weight: 600;
    line-height: 56px;
    letter-spacing: -1px;
}

.mand-card h3 .ic {
    color: #dd5b1f;
    width: 40px;
    height: 40px;
}

.mand-card p {
    margin-top: 8px;
    color: #6b6b6b;
    font-size: 28px;
    line-height: 40px;
    letter-spacing: -.3px;
}

.mand-box {
    width: 2188px;
    height: 200px;
    margin-top: 48px;
    border: 2px solid #f7d5a8;
    border-radius: 16px;
    background: #fdf3e6;
}

/* dock */
.dock {
    width: 2911px;
    height: 89px;
    margin: 6px 0 0 55px;
    padding: 12px 0 0 4px;
    border: 2px solid #4a4c42;
    border-radius: 26px;
    background: linear-gradient(90deg, #1f201b 0%, #2a2118 30%, #23261f 55%, #24271f 70%, #3d2f22 90%, #3a3026 100%);
    display: flex;
}

.di {
    width: 71px;
    flex: none;
    display: flex;
    flex-direction: column;
    align-items: center;
}

.app {
    width: 54px;
    height: 54px;
    flex: none;
    overflow: visible;
}

.run::after {
    content: "";
    margin-top: 10px;
    width: 5px;
    height: 8px;
    border-radius: 3px;
    background: #9c9c94;
}

.thumb svg {
    width: 64px;
    height: 64px;
    margin-top: -5px;
}

.dock-sep {
    width: 2px;
    height: 66px;
    margin: 0 16px;
    background: #5b5c52;
}

.cal-m {
    fill: #fff;
    font-family: Inter, sans-serif;
    font-size: 11px;
    font-weight: 600;
    text-anchor: middle;
}

.cal-d {
    fill: #222;
    font-family: Inter, sans-serif;
    font-size: 28px;
    font-weight: 300;
    text-anchor: middle;
}

.tv-txt {
    fill: #fff;
    font-family: Inter, sans-serif;
    font-size: 22px;
    font-weight: 500;
    text-anchor: middle;
}

.mso {
    fill: #fff;
    font-family: "Liberation Sans", sans-serif;
    font-size: 14px;
    text-anchor: middle;
}
```
